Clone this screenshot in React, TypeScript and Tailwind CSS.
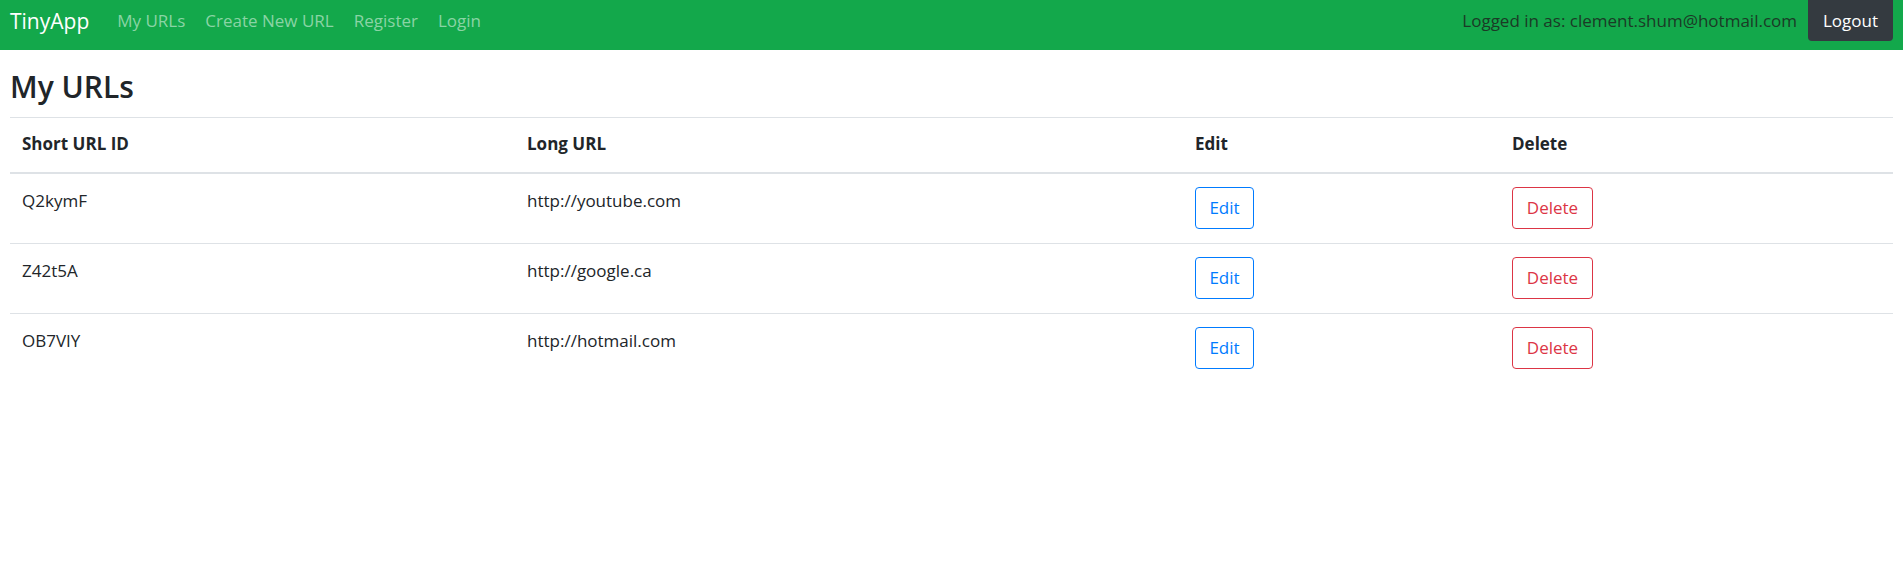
import React from 'react';

interface UrlRow {
  id: string;
  longUrl: string;
}

const urls: UrlRow[] = [
  { id: 'Q2kymF', longUrl: 'http://youtube.com' },
  { id: 'Z42t5A', longUrl: 'http://google.ca' },
  { id: 'OB7VIY', longUrl: 'http://hotmail.com' },
];

const font = "font-['Open_Sans','Noto_Sans',sans-serif]";

const Navbar: React.FC = () => (
  <nav className="flex h-[50px] items-start bg-[#13a84b] px-[10px]">
    <div className="flex h-[41px] w-full items-center">
      <a className="mr-[28px] text-[21px] leading-[30px] text-white">TinyApp</a>
      <div className="flex items-center gap-[20px] text-[17px] leading-6 text-[#8ad4a5]">
        <a>My URLs</a>
        <a>Create New URL</a>
        <a>Register</a>
        <a>Login</a>
      </div>
      <div className="ml-auto flex items-center gap-[11px]">
        <span className="text-[17px] leading-6 text-[#1b3a26]">
          Logged in as: clement.shum@hotmail.com
        </span>
        <button className="flex h-[41px] w-[85px] items-center justify-center rounded-b-[4px] bg-[#343a40] text-[17px] text-white">
          Logout
        </button>
      </div>
    </div>
  </nav>
);

export default function App() {
  return (
    <div className={`min-h-screen bg-white text-[#212529] ${font}`}>
      <Navbar />
      <main className="px-[10px]">
        <h2 className="mt-[19px] mb-[12px] text-[30px] leading-[36px] font-[550]">My URLs</h2>
        <table className="w-full border-collapse text-left text-[17px] leading-6">
          <colgroup>
            <col className="w-[505px]" />
            <col className="w-[668px]" />
            <col className="w-[317px]" />
            <col />
          </colgroup>
          <thead>
            <tr className="border-t border-b-2 border-t-[#dee2e6] border-b-[#dee2e6]">
              <th className="px-3 pt-[14px] pb-[16px] font-bold">Short URL ID</th>
              <th className="px-3 pt-[14px] pb-[16px] font-bold">Long URL</th>
              <th className="px-3 pt-[14px] pb-[16px] font-bold">Edit</th>
              <th className="px-3 pt-[14px] pb-[16px] font-bold">Delete</th>
            </tr>
          </thead>
          <tbody>
            {urls.map((row, i) => (
              <tr key={row.id} className={i > 0 ? 'border-t border-[#dee2e6]' : ''}>
                <td className="px-3 pt-[15px] align-top">{row.id}</td>
                <td className="px-3 pt-[15px] align-top">{row.longUrl}</td>
                <td className="px-3 pt-[13px] pb-[14px] align-top">
                  <button className="flex h-[42px] w-[59px] items-center justify-center rounded-[4px] border border-[#007bff] text-[#007bff]">
                    Edit
                  </button>
                </td>
                <td className="px-3 pt-[13px] pb-[14px] align-top">
                  <button className="flex h-[42px] w-[81px] items-center justify-center rounded-[4px] border border-[#dc3545] text-[#dc3545]">
                    Delete
                  </button>
                </td>
              </tr>
            ))}
          </tbody>
        </table>
      </main>
    </div>
  );
}
